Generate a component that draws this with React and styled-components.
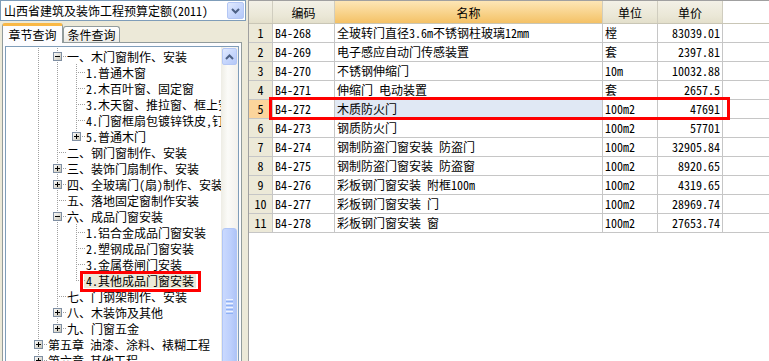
import styled, { createGlobalStyle } from "styled-components";

const GlobalStyle = createGlobalStyle`
  html, body {
    margin: 0;
    padding: 0;
    background: #ECE9D8;
  }
  body {
    font-family: "Noto Sans Mono CJK SC", "Noto Sans CJK SC", sans-serif;
    font-size: 12px;
    color: #000;
  }
`;

const Window = styled.div`
  display: flex;
  width: 769px;
  height: 361px;
  overflow: hidden;
  background: #ECE9D8;
`;

/* ---------- left side ---------- */

const LeftPane = styled.div`
  width: 248px;
  flex: none;
  display: flex;
  flex-direction: column;
`;

const Combo = styled.div`
  width: 246px;
  height: 21px;
  box-sizing: border-box;
  border: 1px solid #7F9DB9;
  background: #fff;
  display: flex;
  align-items: center;
  justify-content: space-between;
  padding: 0 1px 0 3px;
`;

const ComboText = styled.span`
  white-space: nowrap;
  line-height: 16px;
`;

const BlueButton = styled.div`
  width: ${p => p.$w || 17}px;
  height: 17px;
  flex: none;
  box-sizing: border-box;
  border: 1px solid #B4C7F5;
  border-radius: 2px;
  background: linear-gradient(135deg, #E1EAFE 0%, #C6D6FC 55%, #B4C8F8 100%);
  display: flex;
  align-items: center;
  justify-content: center;
`;

const TabStrip = styled.div`
  display: flex;
  align-items: flex-end;
  height: 22px;
  padding-left: 2px;
  margin-bottom: -1px;
  position: relative;
  z-index: 1;
`;

const Tab = styled.div`
  box-sizing: border-box;
  width: ${p => (p.$active ? 61 : 57)}px;
  height: ${p => (p.$active ? 20 : 16)}px;
  margin-bottom: ${p => (p.$active ? 0 : 1)}px;
  border: 1px solid #919B9C;
  border-bottom: none;
  border-top: ${p => (p.$active ? "3px solid #F9B846" : "1px solid #919B9C")};
  border-radius: 3px 3px 0 0;
  background: ${p => (p.$active ? "#FCFCFE" : "linear-gradient(#FFFFFF, #ECEBE6)")};
  display: flex;
  align-items: center;
  justify-content: center;
  line-height: 14px;
  white-space: nowrap;
`;

const TabPage = styled.div`
  flex: 1;
  min-height: 0;
  width: 240px;
  margin-left: 2px;
  box-sizing: border-box;
  border: 1px solid #919B9C;
  border-bottom: none;
  background: #FCFCFE;
  padding: 3px 2px 0 2px;
  display: flex;
  flex-direction: column;
`;

const Tree = styled.div`
  flex: 1;
  min-height: 0;
  border: 1px solid #7F9DB9;
  border-bottom: none;
  background: #fff;
  display: flex;
  overflow: hidden;
`;

const TreeBody = styled.div`
  flex: 1;
  min-width: 0;
  overflow: hidden;
  padding-top: 1px;
`;

const TreeRow = styled.div`
  display: flex;
  align-items: center;
  height: 16px;
  white-space: nowrap;
  position: relative;
`;

const Lead = styled.span`
  flex: none;
  width: 23px;
  height: 16px;
`;

const Cell = styled.span`
  position: relative;
  flex: none;
  width: 19px;
  height: 16px;
  &::before {
    content: "";
    display: ${p => (p.$v === "none" ? "none" : "block")};
    position: absolute;
    left: 9px;
    top: 0;
    width: 1px;
    height: ${p => (p.$v === "half" ? "9px" : "16px")};
    background: repeating-linear-gradient(to bottom, #A0A0A0 0 1px, transparent 1px 2px);
  }
  &::after {
    content: "";
    display: ${p => (p.$h ? "block" : "none")};
    position: absolute;
    left: 10px;
    top: 8px;
    width: 9px;
    height: 1px;
    background: repeating-linear-gradient(to right, transparent 0 1px, #A0A0A0 1px 2px);
  }
`;

const BoxSvg = styled.svg`
  position: absolute;
  left: 5px;
  top: 4px;
  z-index: 1;
`;

const Label = styled.span`
  margin-left: -2px;
  padding: 0 2px;
  line-height: 15px;
  background: ${p => (p.$selected ? "#ECE9D8" : "transparent")};
`;

const Marker = styled.div`
  position: absolute;
  box-sizing: border-box;
  border: 3px solid #FF0000;
  pointer-events: none;
  z-index: 3;
  left: ${p => p.$x}px;
  top: ${p => p.$y}px;
  width: ${p => p.$w}px;
  height: ${p => p.$h}px;
`;

const ScrollBar = styled.div`
  width: 17px;
  flex: none;
  display: flex;
  flex-direction: column;
  align-items: center;
  background: linear-gradient(to right, #EEEDE5, #FBFBF8 40%, #F3F1EC);
  padding-top: 1px;
`;

const Thumb = styled.div`
  margin-top: ${p => p.$offset}px;
  width: 15px;
  height: 150px;
  flex: none;
  box-sizing: border-box;
  border: 1px solid #B0C6F7;
  border-radius: 3px;
  background: linear-gradient(to right, #CAD9FE, #BCCFFC 60%, #AFC4F7);
  display: flex;
  flex-direction: column;
  align-items: center;
  padding-top: 70px;
  gap: 1px;
`;

const Grip = styled.div`
  width: 7px;
  height: 1px;
  background: ${p => (p.$light ? "#EEF4FE" : "#8EB1F5")};
`;

/* ---------- right side ---------- */

const GridPane = styled.div`
  flex: 1;
  background: #fff;
  border-left: 1px solid #A0A0A0;
  border-top: 1px solid #A0A0A0;
  position: relative;
`;

const HeadRow = styled.div`
  display: flex;
  height: 23px;
  box-sizing: border-box;
  border-bottom: 1px solid #C9C6B6;
`;

const HeadCell = styled.div`
  width: ${p => p.$w}px;
  box-sizing: border-box;
  border-right: 1px solid #D0CDBF;
  background: ${p =>
    p.$sorted
      ? "linear-gradient(#FDE6B6, #F7CD7E 70%, #F4C166)"
      : "linear-gradient(#F3F1E7, #EAE7D6 70%, #E3DFCB)"};
  display: flex;
  align-items: center;
  justify-content: center;
  font-size: 12px;
`;

const DataRow = styled.div`
  display: flex;
  height: 19px;
  box-sizing: border-box;
  border-bottom: 1px solid #C6C6C6;
  position: relative;
`;

const DataCell = styled.div`
  width: ${p => p.$w}px;
  flex: none;
  box-sizing: border-box;
  border-right: 1px solid #C6C6C6;
  display: flex;
  align-items: center;
  justify-content: ${p => (p.$align === "right" ? "flex-end" : "flex-start")};
  padding: ${p => (p.$align === "right" ? "0 2px 0 0" : "0 0 0 2px")};
  background: ${p => p.$bg || "#fff"};
  white-space: nowrap;
  overflow: hidden;
  line-height: 16px;
`;

const NumCell = styled.div`
  width: 24px;
  flex: none;
  box-sizing: border-box;
  border-right: 1px solid #C6C6C6;
  background: ${p => (p.$current ? "#FCD59C" : "#ECE9D8")};
  display: flex;
  align-items: center;
  justify-content: center;
  line-height: 16px;
`;

const widths = [24, 62, 268, 55, 65];

const treeRows = [
  { level: 1, text: "一、木门窗制作、安装", box: "-" },
  { level: 2, text: "1.普通木窗" },
  { level: 2, text: "2.木百叶窗、固定窗" },
  { level: 2, text: "3.木天窗、推拉窗、框上安装玻璃" },
  { level: 2, text: "4.门窗框扇包镀锌铁皮,钉橡皮条、钉毛毡" },
  { level: 2, text: "5.普通木门", box: "+", last: true },
  { level: 1, text: "二、钢门窗制作、安装" },
  { level: 1, text: "三、装饰门扇制作、安装", box: "+" },
  { level: 1, text: "四、全玻璃门(扇)制作、安装", box: "+" },
  { level: 1, text: "五、落地固定窗制作安装" },
  { level: 1, text: "六、成品门窗安装", box: "-" },
  { level: 2, text: "1.铝合金成品门窗安装" },
  { level: 2, text: "2.塑钢成品门窗安装" },
  { level: 2, text: "3.金属卷闸门安装" },
  { level: 2, text: "4.其他成品门窗安装", last: true, selected: true },
  { level: 1, text: "七、门钢架制作、安装" },
  { level: 1, text: "八、木装饰及其他", box: "+" },
  { level: 1, text: "九、门窗五金", box: "+", last: true },
  { level: 0, text: "第五章 油漆、涂料、裱糊工程", box: "+" },
  { level: 0, text: "第六章 其他工程", box: "+" },
];

const rows = [
  ["B4-268", "全玻转门直径3.6m不锈钢柱玻璃12mm", "樘", "83039.01"],
  ["B4-269", "电子感应自动门传感装置", "套", "2397.81"],
  ["B4-270", "不锈钢伸缩门", "10m", "10032.88"],
  ["B4-271", "伸缩门 电动装置", "套", "2657.5"],
  ["B4-272", "木质防火门", "100m2", "47691"],
  ["B4-273", "钢质防火门", "100m2", "57701"],
  ["B4-274", "钢制防盗门窗安装 防盗门", "100m2", "32905.84"],
  ["B4-275", "钢制防盗门窗安装 防盗窗", "100m2", "8920.65"],
  ["B4-276", "彩板钢门窗安装 附框100m", "100m2", "4319.65"],
  ["B4-277", "彩板钢门窗安装 门", "100m2", "28969.74"],
  ["B4-278", "彩板钢门窗安装 窗", "100m2", "27653.74"],
];

function Chevron({ up }) {
  return (
    <svg width="9" height="6" viewBox="0 0 9 6" shapeRendering="crispEdges">
      <path
        d={up ? "M1 5L4.5 1.5L8 5" : "M1 1L4.5 4.5L8 1"}
        fill="none"
        stroke="#4D6185"
        strokeWidth="2"
        shapeRendering="auto"
      />
    </svg>
  );
}

function ExpandBox({ sign }) {
  return (
    <BoxSvg width="9" height="9" viewBox="0 0 9 9" shapeRendering="crispEdges">
      <defs>
        <linearGradient id="bxfill" x1="0" y1="0" x2="1" y2="1">
          <stop offset="0" stopColor="#FFFFFF" />
          <stop offset="1" stopColor="#C4C0B0" />
        </linearGradient>
      </defs>
      <rect x="0.5" y="0.5" width="8" height="8" fill="url(#bxfill)" stroke="#7F8FA3" />
      <path d="M2 4.5h5" stroke="#000" />
      {sign === "+" && <path d="M4.5 2v5" stroke="#000" />}
    </BoxSvg>
  );
}

function TreeLine({ item }) {
  const cells = [];
  for (let l = 0; l < item.level; l++) {
    cells.push(<Cell key={l} $v="full" />);
  }
  cells.push(
    <Cell key="own" $v={item.last ? "half" : "full"} $h>
      {item.box && <ExpandBox sign={item.box} />}
    </Cell>
  );
  return (
    <TreeRow>
      <Lead />
      {cells}
      <Label $selected={item.selected}>{item.text}</Label>
      {item.selected && <Marker $x={74} $y={-1} $w={121} $h={21} />}
    </TreeRow>
  );
}

export default function App() {
  return (
    <>
      <GlobalStyle />
      <Window>
        <LeftPane>
          <Combo>
            <ComboText>山西省建筑及装饰工程预算定额(2011)</ComboText>
            <BlueButton>
              <Chevron />
            </BlueButton>
          </Combo>
          <TabStrip>
            <Tab $active>章节查询</Tab>
            <Tab>条件查询</Tab>
          </TabStrip>
          <TabPage>
            <Tree>
              <TreeBody>
                {treeRows.map((item, i) => (
                  <TreeLine key={i} item={item} />
                ))}
              </TreeBody>
              <ScrollBar>
                <BlueButton $w={15}>
                  <Chevron up />
                </BlueButton>
                <Thumb $offset={163}>
                  <Grip $light />
                  <Grip />
                  <Grip $light />
                  <Grip />
                  <Grip $light />
                  <Grip />
                  <Grip $light />
                  <Grip />
                </Thumb>
              </ScrollBar>
            </Tree>
          </TabPage>
        </LeftPane>

        <GridPane>
          <HeadRow>
            <HeadCell $w={widths[0]} />
            <HeadCell $w={widths[1]}>编码</HeadCell>
            <HeadCell $w={widths[2]} $sorted>名称</HeadCell>
            <HeadCell $w={widths[3]}>单位</HeadCell>
            <HeadCell $w={widths[4]}>单价</HeadCell>
          </HeadRow>
          {rows.map((r, i) => {
            const current = i === 4;
            return (
              <DataRow key={r[0]}>
                <NumCell $current={current}>{i + 1}</NumCell>
                <DataCell $w={widths[1]}>{r[0]}</DataCell>
                <DataCell $w={widths[2]} $bg={current ? "#E0E8F4" : null}>
                  {r[1]}
                </DataCell>
                <DataCell $w={widths[3]}>{r[2]}</DataCell>
                <DataCell $w={widths[4]} $align="right">
                  {r[3]}
                </DataCell>
                {current && <Marker $x={20} $y={-3} $w={461} $h={23} />}
              </DataRow>
            );
          })}
        </GridPane>
      </Window>
    </>
  );
}
